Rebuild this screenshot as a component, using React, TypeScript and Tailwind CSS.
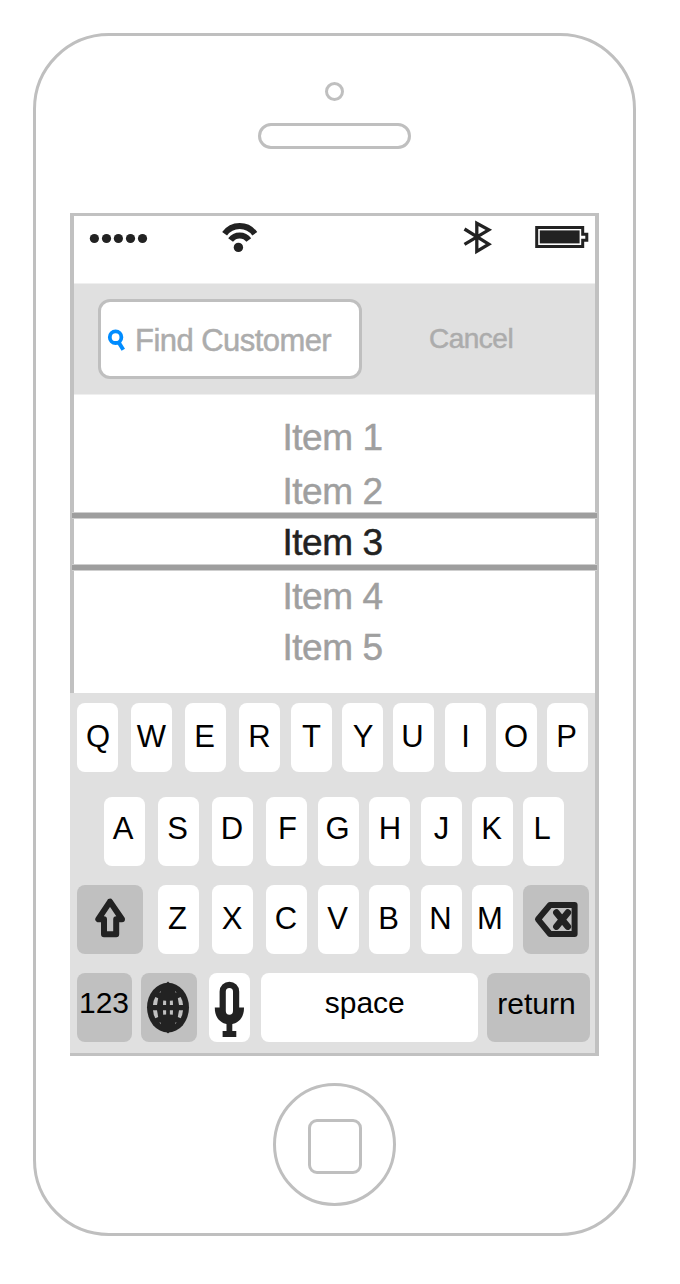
import React from "react";

type LetterKey = { label: string; ml: string; shift?: string };

const topRow: LetterKey[] = [
  { label: "Q", ml: "ml-[6.5px]", shift: "pl-[2px]" },
  { label: "W", ml: "ml-[13px]", shift: "pl-[1px]" },
  { label: "E", ml: "ml-[13.5px]", shift: "pr-[2px]" },
  { label: "R", ml: "ml-[13px]" },
  { label: "T", ml: "ml-[10.5px]", shift: "pl-[1px]" },
  { label: "Y", ml: "ml-[10.5px]", shift: "pl-[1px]" },
  { label: "U", ml: "ml-[10px]", shift: "pr-[2px]" },
  { label: "I", ml: "ml-[10.5px]", shift: "pl-[1px]" },
  { label: "O", ml: "ml-[10.5px]", shift: "pr-[1px]" },
  { label: "P", ml: "ml-[10px]", shift: "pr-[2px]" },
];

const homeRow: LetterKey[] = [
  { label: "A", ml: "ml-[33.5px]", shift: "pr-[2px]" },
  { label: "S", ml: "ml-[13.5px]", shift: "pr-[2px]" },
  { label: "D", ml: "ml-[13px]", shift: "pr-[1px]" },
  { label: "F", ml: "ml-[13px]", shift: "pl-[2px]" },
  { label: "G", ml: "ml-[11px]", shift: "pr-[2px]" },
  { label: "H", ml: "ml-[10px]", shift: "pl-[1px]" },
  { label: "J", ml: "ml-[10.5px]", shift: "pl-[1px]" },
  { label: "K", ml: "ml-[10px]", shift: "pr-[1px]" },
  { label: "L", ml: "ml-[10px]", shift: "pr-[2px]" },
];

const bottomRow: LetterKey[] = [
  { label: "Z", ml: "ml-[15px]", shift: "pr-[1px]" },
  { label: "X", ml: "ml-[13px]" },
  { label: "C", ml: "ml-[13.5px]", shift: "pr-[1px]" },
  { label: "V", ml: "ml-[11px]", shift: "pr-[2px]" },
  { label: "B", ml: "ml-[10px]", shift: "pr-[2px]" },
  { label: "N", ml: "ml-[10.5px]", shift: "pr-[1px]" },
  { label: "M", ml: "ml-[10px]", shift: "pr-[4px]" },
];

function Letter({ k, pt }: { k: LetterKey; pt: string }) {
  return (
    <button
      className={`flex h-[69px] w-[41px] shrink-0 items-start justify-center rounded-[8px] bg-white text-[31px] leading-[30px] ${k.ml} ${pt} ${k.shift ?? ""}`}
    >
      {k.label}
    </button>
  );
}

function StatusBar() {
  return (
    <div className="flex h-[67px] items-start">
      <svg className="mt-[17px] ml-[14px]" width="62" height="12" fill="#222">
        {[6.4, 18.5, 30.4, 42.5, 54.5].map((x) => (
          <circle key={x} cx={x} cy="5.5" r="4.6" />
        ))}
      </svg>
      <svg className="mt-[4px] ml-[70px]" width="40" height="34" fill="none" stroke="#222">
        <path d="M4.6 13.8 A18.5 18.5 0 0 1 34.8 13.8" strokeWidth="6" />
        <path d="M10.6 20 A11.4 11.4 0 0 1 28.8 20" strokeWidth="6" />
        <circle cx="18.4" cy="27.4" r="4.7" fill="#222" stroke="none" />
      </svg>
      <svg className="mt-[2px] ml-[200px]" width="34" height="38" fill="none" stroke="#222" strokeWidth="3.3">
        <path d="M4.5 11 L28.8 26.2 L16.8 33.4 V5.2 L28.8 11.8 L4.5 26.4" />
      </svg>
      <svg className="mt-[8px] ml-[41px]" width="56" height="26">
        <path
          d="M1.7 3.5 H47.7 V10.3 H51.8 V16.3 H47.7 V22.5 H1.7 Z"
          fill="none"
          stroke="#222"
          strokeWidth="3"
        />
        <rect x="4.8" y="6.4" width="39.8" height="13" fill="#222" />
      </svg>
    </div>
  );
}

function SearchHeader() {
  return (
    <div className="flex h-[112px] items-start border-y border-[#efefef] bg-[#e0e0e0]">
      <div className="mt-[15px] ml-[24px] flex h-[80px] w-[264px] items-start rounded-[12px] border-[3px] border-[#bfbfbf] bg-white">
        <svg className="mt-[27px] ml-[5px] shrink-0" width="22" height="26" fill="none" stroke="#008cff" strokeWidth="3.8">
          <circle cx="9.6" cy="8.2" r="5.8" />
          <path d="M12.4 13 L17.3 20.8" strokeWidth="4" />
        </svg>
        <span className="mt-[24px] ml-[7px] text-[31px] leading-[30px] tracking-[-0.55px] whitespace-nowrap text-[#acacac] [-webkit-text-stroke:0.5px_#acacac]">
          Find Customer
        </span>
      </div>
      <button className="mt-[41px] ml-[67px] text-[28px] leading-[28px] tracking-[-0.5px] text-[#acacac] [-webkit-text-stroke:0.5px_#acacac]">
        Cancel
      </button>
    </div>
  );
}

function Divider() {
  return <div className="-mx-[2px] h-[7px] border-y border-[#cfcfcf] bg-[#9e9e9e]" />;
}

function Picker() {
  return (
    <div className="relative flex flex-col text-center text-[37px] leading-[36px] tracking-[-0.45px] text-[#9f9f9f] [-webkit-text-stroke:0.5px_currentColor]">
      <div className="flex h-[117px] flex-col gap-[18px] pt-[25px] pr-[4px]">
        <div>Item 1</div>
        <div>Item 2</div>
      </div>
      <Divider />
      <div className="h-[45px] pt-[6px] pr-[4px] text-[#222]">Item 3</div>
      <Divider />
      <div className="flex h-[122px] flex-col gap-[15px] pt-[8px] pr-[4px]">
        <div>Item 4</div>
        <div>Item 5</div>
      </div>
    </div>
  );
}

function GlobeIcon() {
  const quadrants = ["scale(1 1)", "scale(-1 1)", "scale(1 -1)", "scale(-1 -1)"];
  return (
    <svg width="55" height="69">
      <g transform="translate(27 34.6)">
        <ellipse rx="21" ry="24.8" fill="#222" />
        <path d="M-2 -24 L0 -26 L2 -24 Z M-2 24 L0 26 L2 24 Z" fill="#222" />
        {quadrants.map((t) => (
          <g key={t} transform={t} fill="#c0c0c0">
            <path d="M-12.6 -10.6 L-9.8 -9.4 L-11 -2.6 H-15 Q-14.6 -7.6 -12.6 -10.6 Z" />
            <path d="M-4.8 -7.2 L-1.9 -6.8 V-2.6 H-5 Z" />
            <path d="M-8.6 -15 L-7.2 -16.6 L-7.4 -15 Z" />
          </g>
        ))}
      </g>
    </svg>
  );
}

function Keyboard() {
  return (
    <div className="relative -ml-[4px] h-[360px] w-[525px] bg-[#e0e0e0] pt-[10px] text-[30px] leading-[30px] text-black">
      <div className="flex">
        {topRow.map((k) => (
          <Letter key={k.label} k={k} pt="pt-[19px]" />
        ))}
      </div>
      <div className="mt-[25px] flex">
        {homeRow.map((k) => (
          <Letter key={k.label} k={k} pt="pt-[17px]" />
        ))}
      </div>
      <div className="mt-[19px] flex">
        <button className="ml-[6.5px] h-[69px] w-[66px] rounded-[8px] bg-[#c0c0c0]">
          <svg width="66" height="69" fill="none" stroke="#222" strokeWidth="6" strokeLinejoin="round">
            <path d="M33 16.6 L21.3 34.2 H27 V49.2 H39.2 V34.2 H45 Z" />
          </svg>
        </button>
        {bottomRow.map((k) => (
          <Letter key={k.label} k={k} pt="pt-[19px]" />
        ))}
        <button className="ml-[10.5px] h-[69px] w-[66px] rounded-[8px] bg-[#c0c0c0]">
          <svg width="66" height="69" fill="none" stroke="#222" strokeWidth="6" strokeLinejoin="round">
            <path d="M15 34.3 L27 20 H51.6 V49 H27 Z" />
            <path d="M33.4 27.6 L44.8 41.6 M44.8 27.6 L33.4 41.6" strokeWidth="6.6" strokeLinecap="round" />
          </svg>
        </button>
      </div>
      <div className="mt-[19px] flex">
        <button className="ml-[6.5px] flex h-[69px] w-[55px] justify-center rounded-[8px] bg-[#c0c0c0] pt-[15px]">
          123
        </button>
        <button className="ml-[9.5px] h-[69px] w-[55.5px] rounded-[8px] bg-[#c0c0c0]">
          <GlobeIcon />
        </button>
        <button className="ml-[12.5px] h-[69px] w-[41px] rounded-[8px] bg-white">
          <svg width="41" height="69" fill="none" stroke="#222">
            <path d="M5.8 34.5 H35 C35.5 57 5.3 57 5.8 34.5 Z" fill="#222" stroke="none" />
            <rect x="13.7" y="11.8" width="13.4" height="33" rx="6.7" fill="#fff" strokeWidth="6.2" />
            <path d="M20.4 49 V60" strokeWidth="5.8" />
            <path d="M13.6 61 H27.3" strokeWidth="6" />
          </svg>
        </button>
        <button className="ml-[10.5px] flex h-[69px] w-[217.5px] justify-center rounded-[8px] bg-white pt-[15px] pr-[9px]">
          space
        </button>
        <button className="ml-[9px] flex h-[69px] w-[103px] justify-center rounded-[8px] bg-[#c0c0c0] pt-[16px] pr-[4px]">
          return
        </button>
      </div>
    </div>
  );
}

export default function App() {
  return (
    <div className="h-[1284px] w-[680px] overflow-hidden bg-white pt-[33px] pl-[33px] font-['Liberation_Sans',Arial,sans-serif]">
      <div className="flex h-[1203px] w-[603px] flex-col items-center rounded-[76px] border-[3px] border-[#bfbfbf]">
        <div className="mt-[46px] size-[18.5px] shrink-0 rounded-full border-[3px] border-[#bfbfbf]" />
        <div className="mt-[22.5px] h-[26px] w-[153px] shrink-0 rounded-full border-[3px] border-[#bfbfbf]" />
        <div className="mt-[64px] h-[843px] w-[529px] shrink-0 border-x-4 border-y-[3px] border-[#c1c1c1]">
          <StatusBar />
          <SearchHeader />
          <Picker />
          <Keyboard />
        </div>
        <div className="mt-[27px] flex size-[123px] shrink-0 items-center justify-center rounded-full border-[3px] border-[#bfbfbf]">
          <div className="mt-[4px] h-[55px] w-[54px] rounded-[9px] border-[3px] border-[#bfbfbf]" />
        </div>
      </div>
    </div>
  );
}
